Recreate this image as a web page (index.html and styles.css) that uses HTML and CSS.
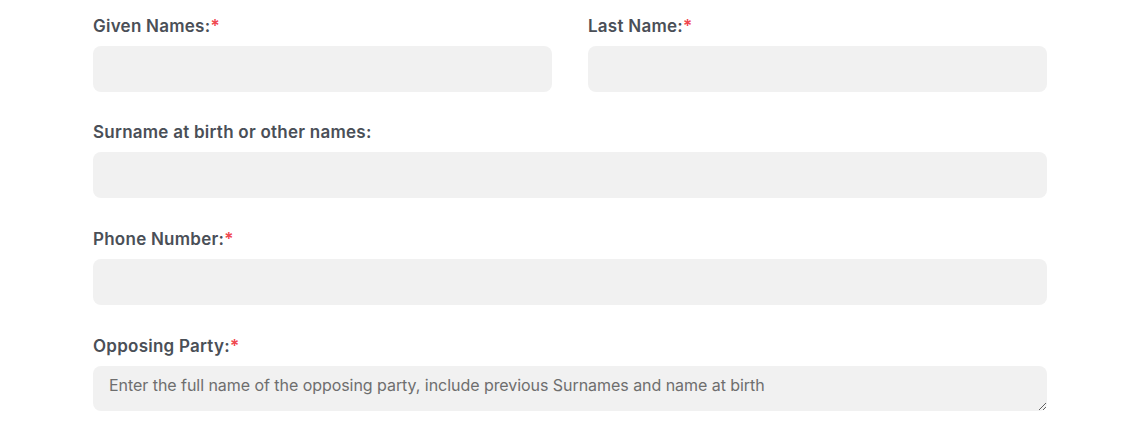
FILE: index.html
```html
<!DOCTYPE html>
<html lang="en">
<head>
  <meta charset="UTF-8">
  <meta name="viewport" content="width=device-width, initial-scale=1.0">
  <title>Client Details</title>
  <link rel="stylesheet" href="styles.css">
</head>
<body>
  <form class="form">
    <div class="row">
      <div class="field">
        <label for="given-names">Given Names:<span class="req">*</span></label>
        <input type="text" id="given-names" required />
      </div>
      <div class="field">
        <label for="last-name">Last Name:<span class="req">*</span></label>
        <input type="text" id="last-name" required />
      </div>
    </div>

    <div class="field">
      <label for="other-names">Surname at birth or other names:</label>
      <input type="text" id="other-names" />
    </div>

    <div class="field">
      <label for="phone">Phone Number:<span class="req">*</span></label>
      <input type="tel" id="phone" required />
    </div>

    <div class="field">
      <label for="opposing">Opposing Party:<span class="req">*</span></label>
      <textarea id="opposing" rows="1" placeholder="Enter the full name of the opposing party, include previous Surnames and name at birth" required></textarea>
    </div>
  </form>
</body>
</html>
```

FILE: styles.css
```css
body {
  margin: 0;
  background: #fff;
  font-family: Inter, "Open Sans", sans-serif;
  color: #4a4f57;
}

.form {
  width: 954px;
  margin: 0 0 0 93px;
  padding-top: 16px;
}

.row {
  display: grid;
  grid-template-columns: 1fr 1fr;
  column-gap: 36px;
}

.field {
  margin-bottom: 31px;
}

.row .field {
  margin-bottom: 30px;
}

label {
  display: block;
  font-size: 17px;
  font-weight: 600;
  line-height: 20px;
  letter-spacing: 0.25px;
  margin-bottom: 10px;
}

.req {
  color: #f0474f;
}

input, textarea {
  display: block;
  box-sizing: border-box;
  width: 100%;
  border: none;
  border-radius: 8px;
  background-color: #f1f1f1;
  font-family: inherit;
  font-size: 16px;
  color: #4a4f57;
}

input {
  height: 46px;
  padding: 0 16px;
}

textarea {
  height: 45px;
  padding: 9px 16px;
  line-height: 20px;
  letter-spacing: -0.05px;
}

textarea::placeholder {
  color: #6e6e6e;
}
```
